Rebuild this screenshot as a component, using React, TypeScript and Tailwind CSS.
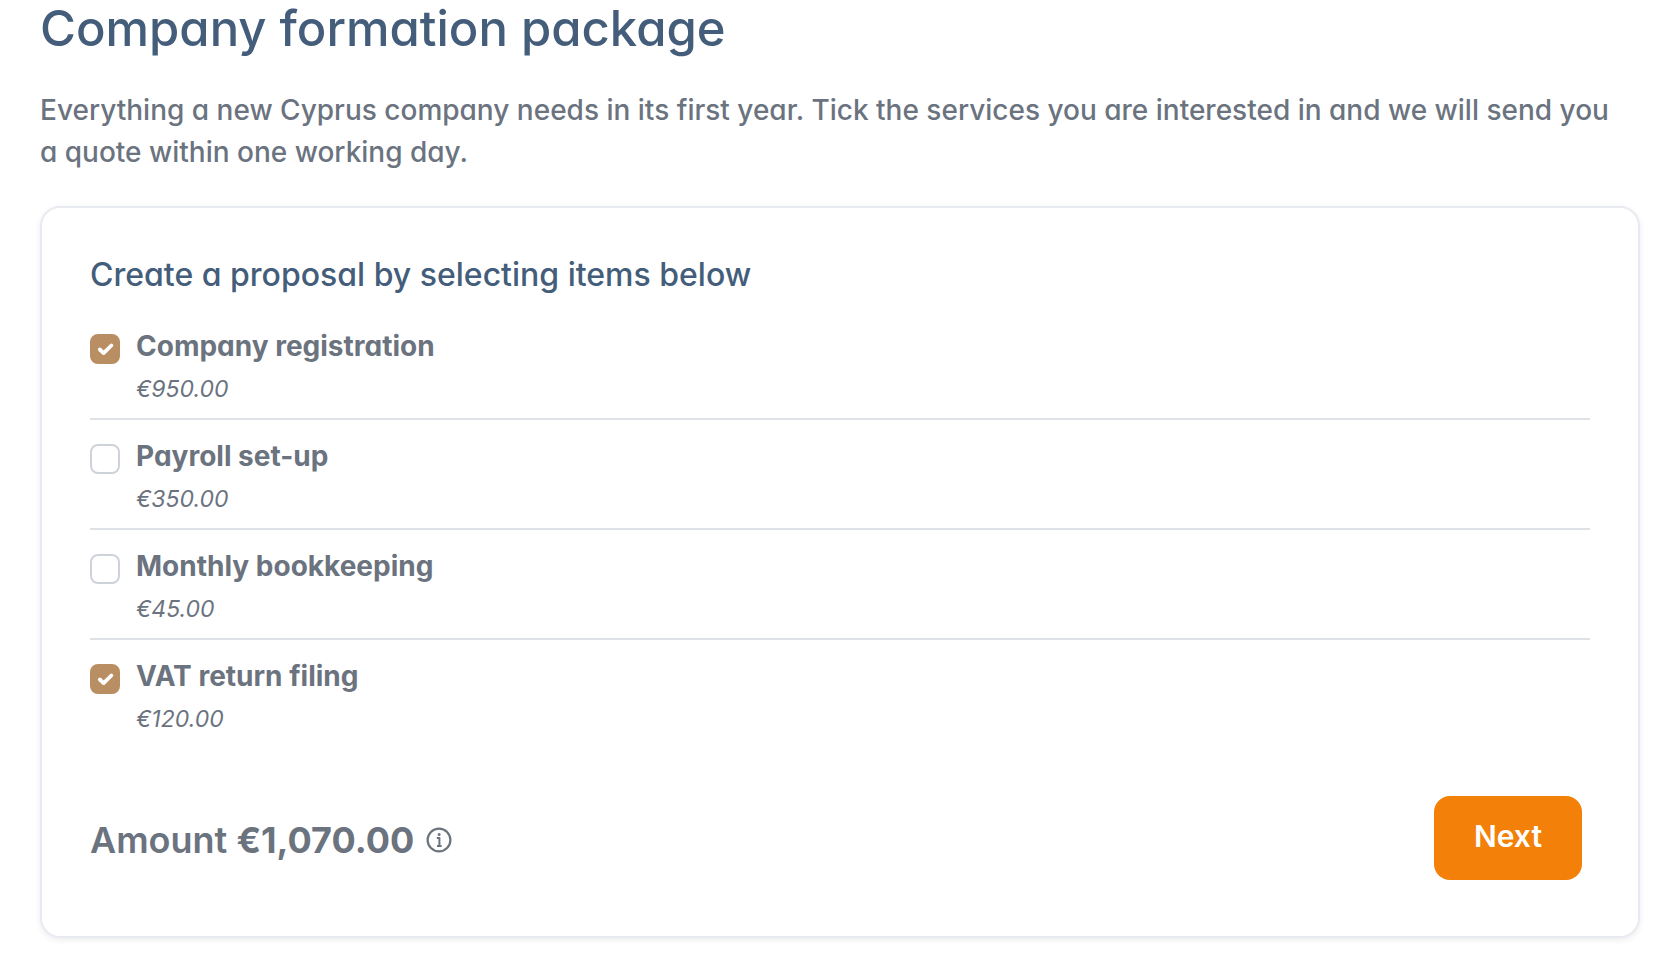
import React, { useState } from 'react';

interface Service {
  id: string;
  name: string;
  price: number;
}

const services: Service[] = [
  { id: 'registration', name: 'Company registration', price: 950 },
  { id: 'payroll', name: 'Payroll set-up', price: 350 },
  { id: 'bookkeeping', name: 'Monthly bookkeeping', price: 45 },
  { id: 'vat', name: 'VAT return filing', price: 120 },
];

const formatPrice = (value: number) =>
  `€${value.toLocaleString('en-US', { minimumFractionDigits: 2 })}`;

const ServiceRow: React.FC<{ service: Service; checked: boolean; onToggle: () => void }> = ({ service, checked, onToggle }) => (
  <li className="flex gap-4 border-b-2 border-[#dee2e8] pt-4 pb-1.5 last:border-b-0">
    <span className="relative mt-2 h-[30px] w-[30px] shrink-0">
      <input
        id={service.id}
        type="checkbox"
        checked={checked}
        onChange={onToggle}
        className="peer block h-full w-full appearance-none rounded-lg border-2 border-[#ced3da] bg-white checked:border-[#b88e62] checked:bg-[#b88e62]"
      />
      <svg viewBox="0 0 30 30" fill="none" className="pointer-events-none absolute inset-0 hidden peer-checked:block">
        <path d="M9.8 15.5l3.8 3.6 7.8-7.6" stroke="#fff" strokeWidth="3.8" strokeLinecap="round" strokeLinejoin="round" />
      </svg>
    </span>
    <div>
      <label htmlFor={service.id} className="block text-[28px] leading-10 font-bold">
        {service.name}
      </label>
      <p className="text-[23px] leading-[46px] italic">{formatPrice(service.price)}</p>
    </div>
  </li>
);

export default function App() {
  const [selected, setSelected] = useState<string[]>(['registration', 'vat']);

  const toggle = (id: string) =>
    setSelected((prev) => (prev.includes(id) ? prev.filter((s) => s !== id) : [...prev, id]));

  const total = services.filter((s) => selected.includes(s.id)).reduce((sum, s) => sum + s.price, 0);

  return (
    <main className="min-h-screen bg-white px-10 pb-7 font-['Inter',sans-serif] text-[#6b737f] [font-feature-settings:'cv11']">
      <h1 className="text-[49px] leading-[58px] font-medium text-[#435d7a]">Company formation package</h1>
      <p className="mt-[31px] pr-4 text-[28px] leading-[42px] font-medium">
        Everything a new Cyprus company needs in its first year. Tick the services you are interested in and we will
        send you a quote within one working day.
      </p>

      <section className="mt-[33px] rounded-[20px] border-2 border-[#e7ebf1] p-12 shadow-[0_2px_6px_rgba(0,0,0,0.08)]">
        <h2 className="mb-4 text-[32px] leading-[38px] font-medium text-[#435d7a]">
          Create a proposal by selecting items below
        </h2>
        <ul>
          {services.map((service) => (
            <ServiceRow
              key={service.id}
              service={service}
              checked={selected.includes(service.id)}
              onToggle={() => toggle(service.id)}
            />
          ))}
        </ul>

        <div className="mt-10 flex items-center justify-between py-2 pr-2">
          <p className="flex items-center gap-3 pt-1 text-4xl font-semibold">
            <span>
              Amount <strong className="font-bold">{formatPrice(total)}</strong>
            </span>
            <svg viewBox="0 0 26 26" fill="none" stroke="currentColor" className="h-[26px] w-[26px]">
              <circle cx="13" cy="13" r="11.4" strokeWidth="2.2" />
              <path d="M10.8 11h2.6v8M11 19h4.6" strokeWidth="2" strokeLinejoin="round" />
              <circle cx="13.1" cy="7.6" r="1.5" fill="currentColor" stroke="none" />
            </svg>
          </p>
          <button className="rounded-2xl bg-[#f38008] px-10 pt-5 pb-6 text-[30px] leading-10 font-semibold text-white">
            Next
          </button>
        </div>
      </section>
    </main>
  );
}
